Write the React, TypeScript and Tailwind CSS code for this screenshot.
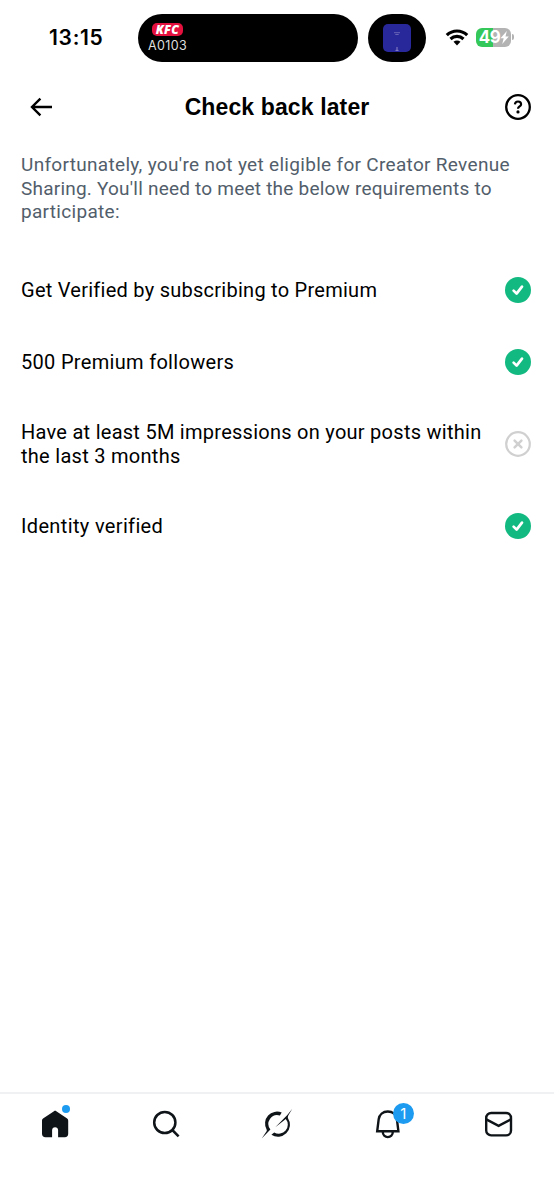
import React from "react";

function CheckBadge() {
  return (
    <svg className="h-[26px] w-[26px] shrink-0" viewBox="0 0 26 26" fill="none">
      <circle cx="13" cy="13" r="13" fill="#12b981" />
      <path d="M8.6 13.6l3 3 5.4-7" stroke="#fff" strokeWidth="2.7" strokeLinecap="round" strokeLinejoin="round" />
    </svg>
  );
}

function CrossBadge() {
  return (
    <svg className="h-[26px] w-[26px] shrink-0" viewBox="0 0 26 26" fill="none" stroke="#d0d0d0">
      <circle cx="13" cy="13" r="11.8" strokeWidth="2.2" />
      <path d="M9.6 9.6l6.8 6.8M16.4 9.6l-6.8 6.8" strokeWidth="2.5" strokeLinecap="round" />
    </svg>
  );
}

function StatusBar() {
  return (
    <div className="flex h-[76px] items-center">
      <div className="w-[138px] pl-[49px] text-[21px] font-semibold leading-6 tracking-[0.7px]">13:15</div>
      <div className="flex h-12 w-[220px] flex-col items-start rounded-full bg-black pl-[10px] pt-[9px]">
        <div className="ml-1 flex h-[13px] w-[31px] items-center justify-center rounded-[5px] bg-[#e4103e] font-['Open_Sans'] text-[12px] font-extrabold italic leading-none tracking-[0.4px] text-white">
          KFC
        </div>
        <div className="mt-[2px] text-[12.5px] leading-[15px] tracking-[0.35px] text-[#dedede]">A0103</div>
      </div>
      <div className="ml-[10px] flex h-12 w-[58px] items-center justify-center rounded-full bg-black">
        <div className="flex h-[28px] w-[28px] flex-col items-center justify-between rounded-[5px] bg-[#28289a] pb-px pt-2">
          <svg className="h-1 w-[6px]" viewBox="0 0 6 4" fill="none" stroke="#7773bf" strokeWidth=".8">
            <path d="M0 .7h6M1.3 2.5h3.4" />
          </svg>
          <svg className="h-1 w-1" viewBox="0 0 4 4" fill="none" stroke="#a39bd2" strokeWidth=".8">
            <path d="M2 0v3M.5 3.4h3" />
          </svg>
        </div>
      </div>
      <svg className="ml-[19px] h-[18px] w-[24px]" viewBox="0 0 24 18" fill="none">
        <path d="M1.8 6.2C7.6 .6 16.4 .6 22.2 6.2" stroke="#000" strokeWidth="3.2" />
        <path d="M5.5 10c3.7-3.5 9.3-3.5 13 0" stroke="#000" strokeWidth="3.1" />
        <path d="M8.5 12.8c2-1.7 5-1.7 7 0L12 16.6z" fill="#000" />
      </svg>
      <div className="mb-[2px] ml-[7px] flex items-center">
        <div className="flex h-[19px] w-[35px] items-center justify-center rounded-[6px] bg-[linear-gradient(90deg,#34c759_49%,#b3b3b3_49%)] pl-px text-[17px] font-bold leading-none text-white">
          <span className="tracking-[-0.4px]">49</span>
          <svg className="h-[13px] w-[9px]" viewBox="0 0 9 13" fill="#fff">
            <path d="M6.8 0L.5 7.3h3.2L2.2 13 8.8 5.5H5.5z" />
          </svg>
        </div>
        <div className="ml-px h-[6px] w-[2px] rounded-r-full bg-[#b3b3b3]" />
      </div>
    </div>
  );
}

function Header() {
  return (
    <header className="flex h-[62px] items-center justify-between pl-[30px] pr-[23px]">
      <svg className="h-[20px] w-[22px]" viewBox="0 0 22 20" fill="none" stroke="#000" strokeWidth="2.4">
        <path d="M10.4 1.6L2 10l8.4 8.4M2 10h20" />
      </svg>
      <h1 className="mr-[3px] whitespace-nowrap font-['Liberation_Sans'] text-[23px] font-bold leading-7 tracking-[0.12px]">Check back later</h1>
      <svg className="h-[26px] w-[26px]" viewBox="0 0 26 26" fill="none" stroke="#000">
        <circle cx="13" cy="13" r="11.8" strokeWidth="2.3" />
        <path d="M9.9 10.4c.2-2 1.4-2.9 3.1-2.9s3.1 1 3.1 2.7c0 2.3-3.1 2.2-3.1 4.6" strokeWidth="2.2" />
        <circle cx="13" cy="17.9" r="1.6" fill="#000" stroke="none" />
      </svg>
    </header>
  );
}

function Requirement({ children, met }: { children: React.ReactNode; met: boolean }) {
  return (
    <li className="flex min-h-7 items-center justify-between">
      <div className="whitespace-nowrap leading-6">{children}</div>
      {met ? <CheckBadge /> : <CrossBadge />}
    </li>
  );
}

function TabBar() {
  return (
    <nav className="grid h-[108px] grid-cols-5 justify-items-center border-t-2 border-[#eff1f2] pt-[15px]">
      <div className="relative h-8 w-8">
        <svg className="h-8 w-8" viewBox="0 0 32 32">
          <path d="M15 2.2c.7-.5 1.6-.5 2.3 0l10.5 7c.9.6 1.4 1.5 1.4 2.6v13c0 2.2-1.2 3.4-3.4 3.4h-6.7v-7c0-1.8-1.2-3-3-3s-3 1.2-3 3v7H6.5c-2.2 0-3.5-1.2-3.5-3.4v-13c0-1.1.5-2 1.4-2.6z" fill="#0f1419" />
        </svg>
        <span className="absolute left-[23px] top-[-4px] h-2 w-2 rounded-full bg-[#1d9bf0]" />
      </div>
      <svg className="h-8 w-8" viewBox="0 0 32 32" fill="none" stroke="#0f1419" strokeWidth="2.5">
        <circle cx="14.8" cy="13.5" r="10.6" />
        <path d="M22.3 21l6.3 6.3" />
      </svg>
      <svg className="h-8 w-8" viewBox="0 0 32 32" fill="#0f1419">
        <path d="M20.7 3.6A11.9 11.9 0 0 0 5.6 20.4c.4 1 .2 1.8-.7 2.9L.7 29.6l8.7-9.1A8.9 8.9 0 0 1 18.9 6.4z" />
        <path d="M31.3-.2l-5 6.2-12 12.2L24.8 10a9 9 0 0 1-11.6 13.4l-2.8 2.3A11.9 11.9 0 0 0 27.1 9.5c-.5-1.4-.3-2.2.6-3.8z" />
      </svg>
      <div className="relative h-8 w-8">
        <svg className="h-8 w-8" viewBox="0 0 32 32" fill="none" stroke="#0f1419" strokeWidth="2.4">
          <path d="M5.2 22.2l1.5-12c.6-4.7 4.3-7.7 9.1-7.7s8.5 3 9.1 7.7l1.5 12zM10.8 22.5v.6a5 5 0 0 0 10 0v-.6" />
        </svg>
        <span className="absolute left-[21px] top-[-6px] flex h-[21px] w-[21px] items-center justify-center rounded-full bg-[#1d9bf0] text-[15px] leading-none text-white">1</span>
      </div>
      <svg className="h-8 w-8" viewBox="0 0 32 32" fill="none" stroke="#0f1419" strokeWidth="2.4">
        <rect x="3.2" y="4" width="24.8" height="22.4" rx="5" />
        <path d="M3.3 10.4l12.3 6.5 12.3-6.5" />
      </svg>
    </nav>
  );
}

export default function App() {
  return (
    <div className="flex h-[1200px] w-[554px] flex-col overflow-hidden bg-white font-['Inter','Liberation_Sans',sans-serif] text-black">
      <StatusBar />
      <Header />
      <main className="flex-1 pl-[21px] pr-[23px] font-['Roboto','Liberation_Sans',sans-serif]">
        <p className="mt-[15px] whitespace-nowrap text-[19px] leading-[23.5px] text-[#525e6b]">
          <span className="tracking-[0.31px]">Unfortunately, you&apos;re not yet eligible for Creator Revenue</span>
          <br />
          <span className="tracking-[0.22px]">Sharing. You&apos;ll need to meet the below requirements to</span>
          <br />
          <span className="tracking-[0.3px]">participate:</span>
        </p>
        <ul className="mt-[52.2px] flex flex-col gap-[44px] text-[20px]">
          <Requirement met>
            <span className="tracking-[0.26px]">Get Verified by subscribing to Premium</span>
          </Requirement>
          <Requirement met>
            <span className="tracking-[0.31px]">500 Premium followers</span>
          </Requirement>
          <Requirement met={false}>
            <span className="tracking-[0.265px]">Have at least 5M impressions on your posts within</span>
            <br />
            <span className="tracking-[0.28px]">the last 3 months</span>
          </Requirement>
          <Requirement met>
            <span className="tracking-[0.35px]">Identity verified</span>
          </Requirement>
        </ul>
      </main>
      <TabBar />
    </div>
  );
}
